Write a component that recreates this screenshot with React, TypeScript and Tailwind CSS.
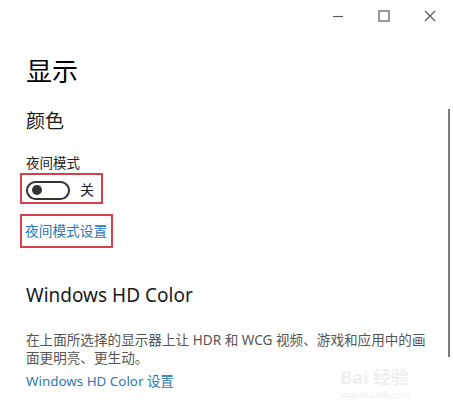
import React from "react";

const cjk = '"Noto Sans", "Noto Sans CJK SC", sans-serif';

export default function App() {
  return (
    <div
      className="relative w-[453px] h-[400px] overflow-hidden bg-white text-[#1a1a1a]"
      style={{ fontFamily: cjk }}
    >
      {/* title bar */}
      <div className="flex h-[32px] justify-end">
        <div className="flex w-[46px] items-center justify-center">
          <svg width="12" height="12" viewBox="0 0 12 12">
            <path d="M1 6.5h10" stroke="#555" strokeWidth="1.1" />
          </svg>
        </div>
        <div className="flex w-[46px] items-center justify-center">
          <svg width="12" height="12" viewBox="0 0 12 12">
            <rect x="1" y="1" width="10" height="10" fill="none" stroke="#555" strokeWidth="1.2" />
          </svg>
        </div>
        <div className="flex w-[46px] items-center justify-center">
          <svg width="12" height="12" viewBox="0 0 12 12">
            <path d="M1 1l10 10M11 1L1 11" stroke="#555" strokeWidth="1.1" />
          </svg>
        </div>
      </div>

      <div className="flex flex-col items-start pl-[26px]">
        <h1 className="mt-[23px] text-[26px] leading-[32px] font-normal text-black">显示</h1>
        <h2 className="mt-[20px] text-[19px] leading-[28px] font-normal">颜色</h2>
        <div className="mt-[18px] text-[13.5px] leading-[20px] text-[#222]">夜间模式</div>

        <div className="-ml-[6px] mt-[0px] flex items-center border-2 border-[#d6404a] pl-[4px] pr-[7px] pt-[5px] pb-[2px]">
          <div className="flex h-[19px] w-[44px] items-center rounded-full border-2 border-[#333] pl-[4px]">
            <div className="h-[10px] w-[10px] rounded-full bg-[#333]" />
          </div>
          <span className="ml-[10px] text-[14px] leading-[20px] text-[#222]">关</span>
        </div>

        <div className="-ml-[6px] mt-[10px] border-2 border-[#d6404a] pl-[3px] pr-[4px] pt-[2px] pb-[4px]">
          <span className="text-[13.7px] leading-[20px] text-[#2a78b6]">夜间模式设置</span>
        </div>

        <h2 className="mt-[33px] text-[19px] leading-[28px] font-normal text-[#1a1a1a]">Windows HD Color</h2>
        <p className="mt-[22px] w-[405px] text-[13.6px] leading-[18px] text-[#555]">
          在上面所选择的显示器上让 HDR 和 WCG 视频、游戏和应用中的画面更明亮、更生动。
        </p>
        <div className="mt-[5px] text-[13.4px] leading-[18px] text-[#2a78b6]">Windows HD Color 设置</div>
      </div>

      {/* scrollbar indicator */}
      <div className="absolute left-[448px] top-[109px] h-[248px] w-[2px] bg-[#7a7a7a]" />

      {/* faint watermark */}
      <div className="pointer-events-none absolute left-[340px] top-[366px] flex flex-col items-center gap-[2px] text-[#efefef]">
        <div className="text-[18px] leading-[22px] font-bold">Bai 经验</div>
        <div className="text-[8px] leading-[9px]">jingyan.baidu.com</div>
      </div>
    </div>
  );
}
